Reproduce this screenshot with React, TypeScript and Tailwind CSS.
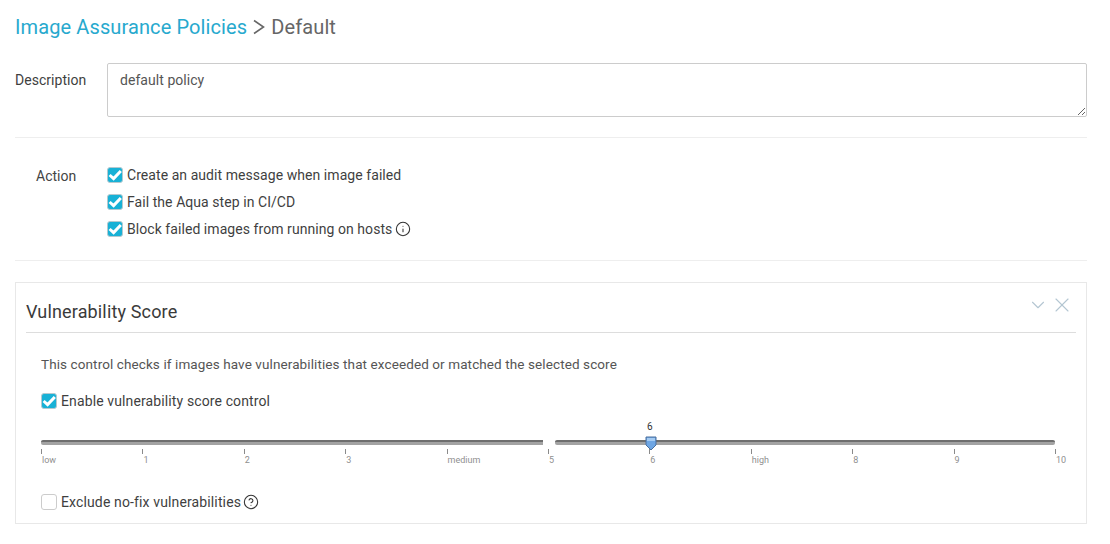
import { Info, CircleHelp, ChevronDown, X } from 'lucide-react';

const TICKS = ['low', '1', '2', '3', 'medium', '5', '6', 'high', '8', '9', '10'];

function Check({ checked = true }: { checked?: boolean }) {
    if (!checked) {
        return <div className="w-4 h-4 rounded-[3px] border border-[#cccccc] bg-white shrink-0" />;
    }
    return (
        <div className="w-4 h-4 rounded-[3px] bg-[#18b1d6] border border-[#b5c9cf] flex items-center justify-center shrink-0">
            <svg viewBox="0 0 14 14" className="w-[14px] h-[14px]" fill="none" stroke="#fff" strokeWidth="3">
                <path d="M1.6 7 L5.6 10.6 L12.8 3" />
            </svg>
        </div>
    );
}

function CheckRow({ label, children }: { label: string; children?: React.ReactNode }) {
    return (
        <div className="flex items-center h-[27px] text-sm tracking-[0.06px] text-[#3f3f3f]">
            <Check />
            <span className="ml-[4px]">{label}</span>
            {children}
        </div>
    );
}

export default function App() {
    return (
        <div className="w-[1110px] h-[544px] bg-white pl-[15px] pr-[23px] font-['Roboto',sans-serif] overflow-hidden">
            <h1 className="flex items-center h-[24px] mt-[15px] text-[20px] leading-[24px] font-normal tracking-[0.11px]">
                <span className="text-[#27a9ce]">Image Assurance Policies</span>
                <svg viewBox="0 0 12 16" className="w-[12px] h-[16px] ml-[6px] mr-[6px]" fill="none" stroke="#666666" strokeWidth="1.6">
                    <path d="M1 1.5 L10.5 8 L1 14.5" />
                </svg>
                <span className="text-[#666666]">Default</span>
            </h1>

            <div className="flex mt-[24px]">
                <label className="w-[92px] text-sm tracking-[0.03px] text-[#3f3f3f] pt-[8px] leading-[18px]">Description</label>
                <textarea
                    defaultValue="default policy"
                    className="flex-1 h-[54px] block rounded-[2px] border border-[#cccccc] px-[12px] py-[7px] text-sm tracking-[0.05px] leading-[18px] text-[#555555] outline-none"
                />
            </div>

            <div className="border-t border-[#eeeeee] mt-[20px]" />

            <div className="flex mt-[23px]">
                <div className="w-[92px] pl-[21px] text-sm leading-[18px] text-[#444444] pt-[6px]">Action</div>
                <div>
                    <CheckRow label="Create an audit message when image failed" />
                    <CheckRow label="Fail the Aqua step in CI/CD" />
                    <CheckRow label="Block failed images from running on hosts">
                        <Info className="w-[16px] h-[16px] ml-[3px] text-[#333333]" strokeWidth={1.6} />
                    </CheckRow>
                </div>
            </div>

            <div className="border-t border-[#eeeeee] mt-[18px]" />

            <section className="mt-[21px] h-[242px] border border-[#e8e8e8] px-[10px]">
                <div className="relative h-[50px] border-b border-[#dddddd] pt-[17px]">
                    <h2 className="text-[18px] leading-[24px] font-normal tracking-[0.15px] text-[#3a3a3a]">Vulnerability Score</h2>
                    <div className="absolute right-[2px] top-[10px] flex items-center text-[#b4c6d2]">
                        <ChevronDown className="w-[22px] h-[22px] mr-[1px]" strokeWidth={1.2} />
                        <X className="w-[24px] h-[24px]" strokeWidth={1.1} />
                    </div>
                </div>

                <div className="px-[15px]">
                    <p className="mt-[22px] text-[13.5px] tracking-[0.1px] leading-[18px] text-[#555555]">
                        This control checks if images have vulnerabilities that exceeded or matched the selected score
                    </p>
                    <div className="flex items-center mt-[19px] h-[18px] text-sm tracking-[0.12px] text-[#3f3f3f]">
                        <Check />
                        <span className="ml-[4px]">Enable vulnerability score control</span>
                    </div>

                    <div className="relative mt-[15px] w-[1014px] h-[44px]">
                        <div className="absolute left-[606px] top-[-4px] text-[10px] leading-[12px] text-[#333333]">6</div>
                        <div className="flex gap-[12px] pt-[15px]">
                            <div className="w-[502px] h-[5px] rounded-l-[2px] bg-[#a3a3a3] border-t-2 border-[#6e6e6e]" />
                            <div className="flex-1 h-[5px] rounded-[2px] bg-[#a3a3a3] border-t-2 border-[#6e6e6e]" />
                        </div>
                        <svg viewBox="0 0 12 15" className="absolute left-[604px] top-[11px] w-[12px] h-[15px]">
                            <path d="M1 1 H11 V9 L6 14 L1 9 Z" fill="#6ea6e4" stroke="#4a6f9c" strokeWidth="1" />
                            <path d="M2 2 H10 V5 H2 Z" fill="#a5cbf2" />
                        </svg>
                        <div className="flex justify-between mt-[4px]">
                            {TICKS.map(t => (
                                <div key={t} className="w-0 flex flex-col items-start">
                                    <div className="w-px h-[5px] bg-[#8a8a8a]" />
                                    <span className="pl-[1px] text-[9px] leading-[12px] text-[#8f8f8f] whitespace-nowrap">{t}</span>
                                </div>
                            ))}
                        </div>
                    </div>

                    <div className="flex items-center mt-[24px] h-[18px] text-sm tracking-[0.13px] text-[#3f3f3f]">
                        <Check checked={false} />
                        <span className="ml-[4px]">Exclude no-fix vulnerabilities</span>
                        <CircleHelp className="w-[16px] h-[16px] ml-[2px] text-[#333333]" strokeWidth={1.6} />
                    </div>
                </div>
            </section>
        </div>
    );
}
